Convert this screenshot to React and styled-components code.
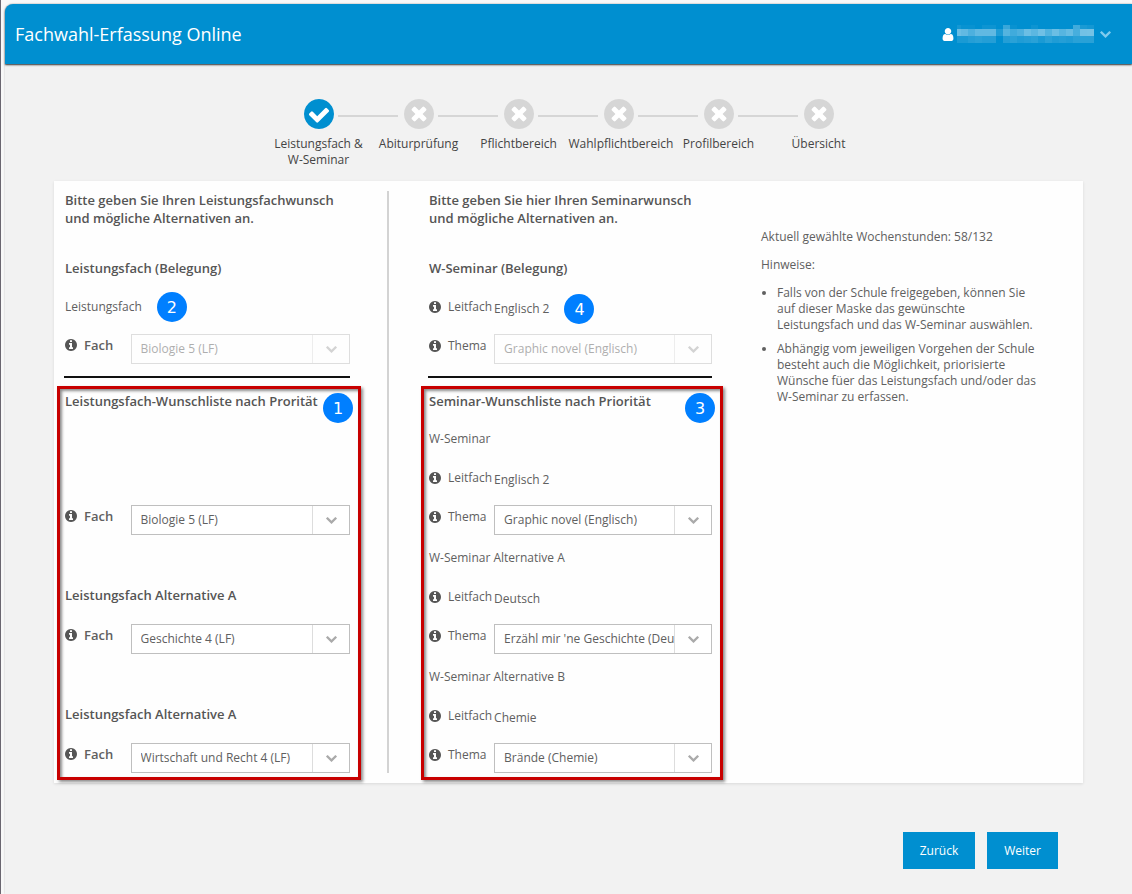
import { useState } from "react";
import styled, { createGlobalStyle } from "styled-components";

const GlobalStyle = createGlobalStyle`
  * {
    box-sizing: border-box;
  }
  body {
    margin: 0;
    background: #f8f8f8;
    color: #606060;
    font-family: "Open Sans", "Noto Sans", sans-serif;
    font-size: 12px;
    line-height: 16px;
  }
  h1, h2, h3, p, ul, ol {
    margin: 0;
    padding: 0;
    font-size: inherit;
    font-weight: inherit;
  }
  button, select {
    font: inherit;
    color: inherit;
  }
`;

const Page = styled.div`
  min-height: 100vh;
  padding: 4px 0 0 4px;
  border-left: 1px solid #6a6670;
`;

const Shell = styled.div`
  min-height: calc(100vh - 4px);
  background: #f2f2f2;
  border-top-left-radius: 8px;
  box-shadow: 0 0 2px rgba(0, 0, 0, 0.25);
`;

const Header = styled.header`
  display: flex;
  justify-content: space-between;
  align-items: center;
  height: 60px;
  padding: 0 21px 0 10px;
  background: #008fd0;
  border-top-left-radius: 8px;
  box-shadow: 0 1px 2px rgba(0, 0, 0, 0.8);
  color: #fff;
`;

const Title = styled.h1`
  font-size: 18px;
  line-height: 24px;
`;

const UserMenu = styled.button`
  display: flex;
  align-items: center;
  gap: 3px;
  padding: 0;
  border: 0;
  background: none;
  .caret {
    margin-left: 3px;
    color: #7fcbee;
  }
`;

const Steps = styled.ol`
  display: flex;
  justify-content: center;
  margin-top: 35px;
  list-style: none;
`;

const Step = styled.li`
  display: flex;
  flex-direction: column;
  gap: 7px;
  width: 100px;
  color: #444;
  text-align: center;
  white-space: pre;
`;

const StepMark = styled.span`
  display: flex;
  align-items: center;
  align-self: center;
  gap: 4px;
  width: 30px;
  height: 30px;
  color: ${({ $active }) => ($active ? "#008fd0" : "#d6d6d6")};
  svg {
    flex: none;
    background: radial-gradient(#fff 60%, transparent 61%);
  }
`;

const StepLine = styled.span`
  flex: none;
  width: 60px;
  height: 2px;
  margin-top: 4px;
  background: #d6d6d6;
`;

const Card = styled.main`
  display: grid;
  grid-template-columns: 325fr 372fr 312fr;
  margin: 13px 49px 0;
  padding: 10px;
  background: #fefefe;
  box-shadow: 0 1px 3px rgba(0, 0, 0, 0.1);
`;

const Column = styled.section`
  padding: ${({ $second }) => ($second ? "0 49px 0 40px" : "0 37px 0 1px")};
  border-right: ${({ $second }) => ($second ? "0" : "2px solid #d3d3d3")};
`;

const Intro = styled.h2`
  min-height: 58px;
  color: #555;
  font-size: 13px;
  font-weight: 600;
  line-height: 18px;
`;

const Row = styled.div`
  display: flex;
  align-items: flex-start;
  height: 39px;
  padding-top: 10px;
  line-height: 18px;
`;

const StrongRow = styled.h3`
  height: 39px;
  padding-top: 10px;
  color: #555;
  font-size: 13px;
  font-weight: 600;
  line-height: 18px;
`;

const FieldRow = styled.div`
  display: grid;
  grid-template-columns: 23% 1fr;
  align-items: start;
  height: 39px;
`;

const Label = styled.label`
  display: flex;
  align-items: center;
  gap: 7px;
  padding-top: ${({ $strong }) => ($strong ? "9px" : "10px")};
  font-size: ${({ $strong }) => ($strong ? "13px" : "12px")};
  font-weight: ${({ $strong }) => ($strong ? 600 : 400)};
  line-height: 18px;
  white-space: nowrap;
  svg {
    color: #555;
  }
`;

const Value = styled.output`
  display: flex;
  align-items: flex-start;
  padding-top: 12px;
  line-height: 18px;
`;

const SelectBox = styled.div`
  display: flex;
  min-width: 0;
  height: 30px;
  margin-top: 7px;
  border: 1px solid #bfbfbf;
  background: #fff;
  opacity: ${({ $disabled }) => ($disabled ? 0.5 : 1)};
`;

const Select = styled.select`
  flex: 1;
  min-width: 0;
  padding: 0 0 0 9px;
  border: 0;
  background: none;
  appearance: none;
  &:disabled {
    opacity: 1;
  }
`;

const Arrow = styled.span`
  display: flex;
  justify-content: center;
  align-items: center;
  width: 37px;
  border-left: 1px solid #ddd;
  color: #aaa;
`;

const Rule = styled.hr`
  height: 2px;
  margin: 10px 0 0 -1px;
  border: 0;
  background: #111;
`;

const WishBox = styled.div`
  position: relative;
  margin: 8px -11px -7px -8px;
  padding: 3px 8px 2px 5px;
  border: 3px solid #c80000;
  box-shadow: 2px 2px 3px rgba(0, 0, 0, 0.45), inset 2px 2px 3px rgba(0, 0, 0, 0.45);
`;

const WishTitle = styled.h3`
  height: 28px;
  color: #555;
  font-size: 13px;
  font-weight: 600;
  line-height: 18px;
`;

const Group = styled.div`
  display: flex;
  flex-direction: column;
  justify-content: flex-end;
  min-height: 117px;
  & + & {
    margin-top: 2px;
  }
  h3 {
    height: 41px;
  }
`;

const Badge = styled.span`
  display: inline-flex;
  justify-content: center;
  align-items: center;
  width: 30px;
  height: 30px;
  border-radius: 50%;
  background: #007fff;
  color: #fff;
  font: 16px "DejaVu Sans", sans-serif;
`;

const InlineBadge = styled(Badge)`
  margin: -6px 0 -6px 15px;
`;

const CornerBadge = styled(Badge)`
  position: absolute;
  top: 4px;
  right: 5px;
`;

const Hints = styled.aside`
  padding: 38px 32px 0 0;
  p {
    margin-bottom: 12px;
  }
  ul {
    padding-left: 16px;
  }
  li {
    margin-bottom: 8px;
  }
`;

const Actions = styled.footer`
  display: flex;
  justify-content: flex-end;
  gap: 12px;
  margin: 49px 74px 0 0;
  padding-bottom: 25px;
`;

const Button = styled.button`
  height: 37px;
  padding: 0 17px;
  border: 0;
  background: #008fd0;
  color: #fff;
`;

const DISC = "M1536 640q0 -209 -103 -385.5t-279.5 -279.5t-385.5 -103t-385.5 103t-279.5 279.5t-103 385.5t103 385.5t279.5 279.5t385.5 103t385.5 -103t279.5 -279.5t103 -385.5z";

const icons = {
  check: {
    box: "0 0 1536 1536",
    d: "M1284 802q0 28 -18 46l-91 90q-19 19 -45 19t-45 -19l-408 -407l-226 226q-19 19 -45 19t-45 -19l-91 -90q-18 -18 -18 -46q0 -27 18 -45l362 -362q19 -19 45 -19q27 0 46 19l543 543q18 18 18 45z" + DISC,
  },
  times: {
    box: "0 0 1536 1536",
    d: "M1149 414q0 26 -19 45l-181 181l181 181q19 19 19 45q0 27 -19 46l-90 90q-19 19 -46 19q-26 0 -45 -19l-181 -181l-181 181q-19 19 -45 19q-27 0 -46 -19l-90 -90q-19 -19 -19 -46q0 -26 19 -45l181 -181l-181 -181q-19 -19 -19 -45q0 -27 19 -46l90 -90q19 -19 46 -19q26 0 45 19l181 181l181 -181q19 -19 45 -19q27 0 46 19l90 90q19 19 19 46z" + DISC,
  },
  info: {
    box: "0 0 1536 1536",
    d: "M1024 160v160q0 14 -9 23t-23 9h-96v512q0 14 -9 23t-23 9h-320q-14 0 -23 -9t-9 -23v-160q0 -14 9 -23t23 -9h96v-320h-96q-14 0 -23 -9t-9 -23v-160q0 -14 9 -23t23 -9h448q14 0 23 9t9 23zM896 1056v160q0 14 -9 23t-23 9h-192q-14 0 -23 -9t-9 -23v-160q0 -14 9 -23t23 -9h192q14 0 23 9t9 23z" + DISC,
  },
  user: {
    box: "0 0 1280 1536",
    d: "M1280 137q0 -109 -62.5 -187t-150.5 -78h-854q-88 0 -150.5 78t-62.5 187q0 85 8.5 160.5t31.5 152t58.5 131t94 89t134.5 34.5q131 -128 313 -128t313 128q76 0 134.5 -34.5t94 -89t58.5 -131t31.5 -152t8.5 -160.5zM1024 1024q0 -159 -112.5 -271.5t-271.5 -112.5t-271.5 112.5t-112.5 271.5t112.5 271.5t271.5 112.5t271.5 -112.5t112.5 -271.5z",
  },
  chevron: {
    box: "90 405 1612 1035",
    d: "M1683 728l-742 -741q-19 -19 -45 -19t-45 19l-742 741q-19 19 -19 45.5t19 45.5l166 165q19 19 45 19t45 -19l531 -531l531 531q19 19 45 19t45 -19l166 -165q19 -19 19 -45.5t-19 -45.5z",
  },
};

function Icon({ name, width, height = width, className }) {
  return (
    <svg className={className} width={width} height={height} viewBox={icons[name].box} aria-hidden="true">
      <path transform="translate(0 1408) scale(1 -1)" fill="currentColor" fillRule="evenodd" d={icons[name].d} />
    </svg>
  );
}

// masked user name, white opacity in percent per block
const mask = [
  [8, 3, 3, 0, 5, 5, 0, 22, 3, 0, 0, 5, 0, 0, 0, 0, 0, 25, 10, 8],
  [42, 38, 30, 38, 38, 38, 12, 33, 25, 30, 42, 36, 44, 32, 42, 34, 40, 28, 45, 46],
  [10, 10, 14, 16, 14, 14, 0, 14, 16, 12, 14, 16, 10, 16, 12, 14, 12, 16, 16, 16],
];

function MaskedName() {
  return (
    <svg width="137" height="18" viewBox="3 0 137 18" role="img" aria-label="Benutzer" shapeRendering="crispEdges">
      {mask.map((line, row) =>
        line.map((value, col) => (
          <rect
            key={`${row}-${col}`}
            x={col * 7}
            y={[0, 4, 11][row]}
            width="7"
            height={[4, 7, 7][row]}
            fill="#fff"
            fillOpacity={value / 100}
          />
        ))
      )}
    </svg>
  );
}

const steps = [
  "Leistungsfach &\nW-Seminar",
  "Abiturprüfung",
  "Pflichtbereich",
  "Wahlpflichtbereich",
  "Profilbereich",
  "Übersicht",
];

const subjects = ["Biologie 5 (LF)", "Geschichte 4 (LF)", "Wirtschaft und Recht 4 (LF)"];

const topics = ["Graphic novel (Englisch)", "Erzähl mir 'ne Geschichte (Deutsch)", "Brände (Chemie)"];

const subjectWishes = [
  { title: "", value: subjects[0] },
  { title: "Leistungsfach Alternative A", value: subjects[1] },
  { title: "Leistungsfach Alternative A", value: subjects[2] },
];

const seminarWishes = [
  { title: "W-Seminar", subject: "Englisch 2", value: topics[0] },
  { title: "W-Seminar Alternative A", subject: "Deutsch", value: topics[1] },
  { title: "W-Seminar Alternative B", subject: "Chemie", value: topics[2] },
];

function SelectField({ id, label, strong, options, initial, disabled }) {
  const [value, setValue] = useState(initial);

  return (
    <FieldRow>
      <Label htmlFor={id} $strong={strong}>
        <Icon name="info" width={12} />
        {label}
      </Label>
      <SelectBox $disabled={disabled}>
        <Select id={id} value={value} disabled={disabled} onChange={(e) => setValue(e.target.value)}>
          {options.map((option) => (
            <option key={option}>{option}</option>
          ))}
        </Select>
        <Arrow>
          <Icon name="chevron" width={11} height={7} />
        </Arrow>
      </SelectBox>
    </FieldRow>
  );
}

function SubjectValue({ id, value, badge }) {
  return (
    <FieldRow>
      <Label htmlFor={id}>
        <Icon name="info" width={12} />
        Leitfach
      </Label>
      <Value id={id}>
        {value}
        {badge && <InlineBadge>{badge}</InlineBadge>}
      </Value>
    </FieldRow>
  );
}

function App() {
  return (
    <Page>
      <GlobalStyle />
      <Shell>
        <Header>
          <Title>Fachwahl-Erfassung Online</Title>
          <UserMenu type="button">
            <Icon name="user" width={12} height={13} />
            <MaskedName />
            <Icon className="caret" name="chevron" width={11} height={7} />
          </UserMenu>
        </Header>

        <Steps>
          {steps.map((step, index) => (
            <Step key={step}>
              <StepMark $active={index === 0}>
                <Icon name={index === 0 ? "check" : "times"} width={30} />
                {index < steps.length - 1 && <StepLine />}
              </StepMark>
              {step}
            </Step>
          ))}
        </Steps>

        <Card>
          <Column>
            <Intro>Bitte geben Sie Ihren Leistungsfachwunsch und mögliche Alternativen an.</Intro>
            <StrongRow>Leistungsfach (Belegung)</StrongRow>
            <Row>
              Leistungsfach
              <InlineBadge>2</InlineBadge>
            </Row>
            <SelectField id="fach" label="Fach" strong options={subjects} initial={subjects[0]} disabled />
            <Rule />
            <WishBox>
              <WishTitle>Leistungsfach-Wunschliste nach Prorität</WishTitle>
              <CornerBadge>1</CornerBadge>
              {subjectWishes.map((wish, index) => (
                <Group key={index}>
                  {wish.title && <StrongRow>{wish.title}</StrongRow>}
                  <SelectField id={`fach-${index}`} label="Fach" strong options={subjects} initial={wish.value} />
                </Group>
              ))}
            </WishBox>
          </Column>

          <Column $second>
            <Intro>Bitte geben Sie hier Ihren Seminarwunsch und mögliche Alternativen an.</Intro>
            <StrongRow>W-Seminar (Belegung)</StrongRow>
            <SubjectValue id="leitfach" value="Englisch 2" badge="4" />
            <SelectField id="thema" label="Thema" options={topics} initial={topics[0]} disabled />
            <Rule />
            <WishBox>
              <WishTitle>Seminar-Wunschliste nach Priorität</WishTitle>
              <CornerBadge>3</CornerBadge>
              {seminarWishes.map((wish, index) => (
                <Group key={index}>
                  <Row>{wish.title}</Row>
                  <SubjectValue id={`leitfach-${index}`} value={wish.subject} />
                  <SelectField id={`thema-${index}`} label="Thema" options={topics} initial={wish.value} />
                </Group>
              ))}
            </WishBox>
          </Column>

          <Hints>
            <p>Aktuell gewählte Wochenstunden: 58/132</p>
            <p>Hinweise:</p>
            <ul>
              <li>
                Falls von der Schule freigegeben, können Sie auf dieser Maske das gewünschte Leistungsfach und das
                W-Seminar auswählen.
              </li>
              <li>
                Abhängig vom jeweiligen Vorgehen der Schule besteht auch die Möglichkeit, priorisierte Wünsche füer das
                Leistungsfach und/oder das W-Seminar zu erfassen.
              </li>
            </ul>
          </Hints>
        </Card>

        <Actions>
          <Button type="button">Zurück</Button>
          <Button type="button">Weiter</Button>
        </Actions>
      </Shell>
    </Page>
  );
}

export default App;
